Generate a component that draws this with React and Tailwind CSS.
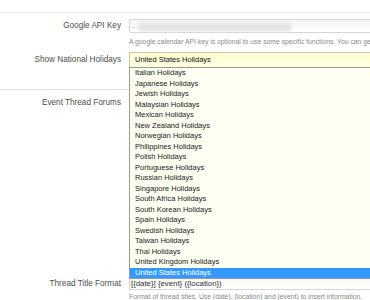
import React from 'react';

const holidays = [
  'Italian Holidays',
  'Japanese Holidays',
  'Jewish Holidays',
  'Malaysian Holidays',
  'Mexican Holidays',
  'New Zealand Holidays',
  'Norwegian Holidays',
  'Philippines Holidays',
  'Polish Holidays',
  'Portuguese Holidays',
  'Russian Holidays',
  'Singapore Holidays',
  'South Africa Holidays',
  'South Korean Holidays',
  'Spain Holidays',
  'Swedish Holidays',
  'Taiwan Holidays',
  'Thai Holidays',
  'United Kingdom Holidays',
  'United States Holidays',
];

const Label = ({ children, className = '' }) => (
  <div className={`w-[121px] shrink-0 text-right text-[8.2px] text-[#4d4d4d] ${className}`}>{children}</div>
);

export default function App() {
  return (
    <div className="relative h-[300px] w-full overflow-hidden bg-white font-['Liberation_Sans',Arial,sans-serif]">
      {/* top edge of previous block */}
      <div className="h-[13px] border-b border-[#e4eaf1]" />

      {/* Google API Key */}
      <div className="flex gap-[8px] pt-[6px]">
        <Label className="leading-[14px]">Google API Key</Label>
        <div className="flex-1">
          <div className="relative h-[14px] w-[300px] rounded-[2px] border border-[#d6d6d6] bg-gradient-to-b from-[#f4f4f4] to-white">
            <span className="absolute left-[2px] top-[1px] text-[8px] leading-[10px] text-[#555]">.</span>
            <div className="absolute left-[8px] top-[3px] h-[8px] w-[154px] rounded-full bg-[#e4e4e4] blur-[1.5px]" />
          </div>
          <p className="mt-[4px] whitespace-nowrap text-[6.8px] leading-[10px] text-[#8a8a8a]">
            A google calendar API key is optional to use some specific functions. You can get one from Google.
          </p>
        </div>
      </div>

      {/* Show National Holidays */}
      <div className="flex gap-[8px] border-b border-[#d9e4ee] pb-[21px] pt-[5px]">
        <Label className="leading-[16px]">Show National Holidays</Label>
        <div className="relative flex-1">
          <div className="h-[16px] w-[300px] border border-[#c8c8b4] bg-gradient-to-b from-[#fefed0] to-[#ffffe2] pl-[5px] text-[7.5px] leading-[14px] text-[#111]">
            United States Holidays
          </div>
          {/* open dropdown list */}
          <ul className="absolute left-0 top-[15px] z-10 w-[300px] border border-[#9a9a9a] bg-[#fffff2] text-[7.5px] text-[#222]">
            {holidays.map((h, i) => (
              <li
                key={h}
                className={`h-[10.5px] whitespace-nowrap pl-[5px] leading-[10.5px] ${
                  i === holidays.length - 1 ? 'bg-[#3399ff] text-white' : ''
                }`}
              >
                {h}
              </li>
            ))}
          </ul>
        </div>
      </div>

      {/* Event Thread Forums */}
      <div className="flex h-[182px] gap-[8px] pt-[8px]">
        <Label className="leading-[10px]">Event Thread Forums</Label>
        <div className="flex-1" />
      </div>

      {/* Thread Title Format */}
      <div className="flex gap-[8px] pt-[5px]">
        <Label className="leading-[13px]">Thread Title Format</Label>
        <div className="flex-1">
          <div className="h-[13px] w-[300px] border border-[#d6d6d6] bg-gradient-to-b from-[#f6f6f6] to-white pl-[1px] text-[7.8px] leading-[12px] text-[#333]">
            [{'{'}date{'}'}] {'{'}event{'}'} ({'{'}location{'}'})
          </div>
          <p className="mt-[2px] whitespace-nowrap text-[6.8px] leading-[10px] text-[#8a8a8a]">
            Format of thread titles. Use {'{'}date{'}'}, {'{'}location{'}'} and {'{'}event{'}'} to insert information.
          </p>
        </div>
      </div>
    </div>
  );
}
